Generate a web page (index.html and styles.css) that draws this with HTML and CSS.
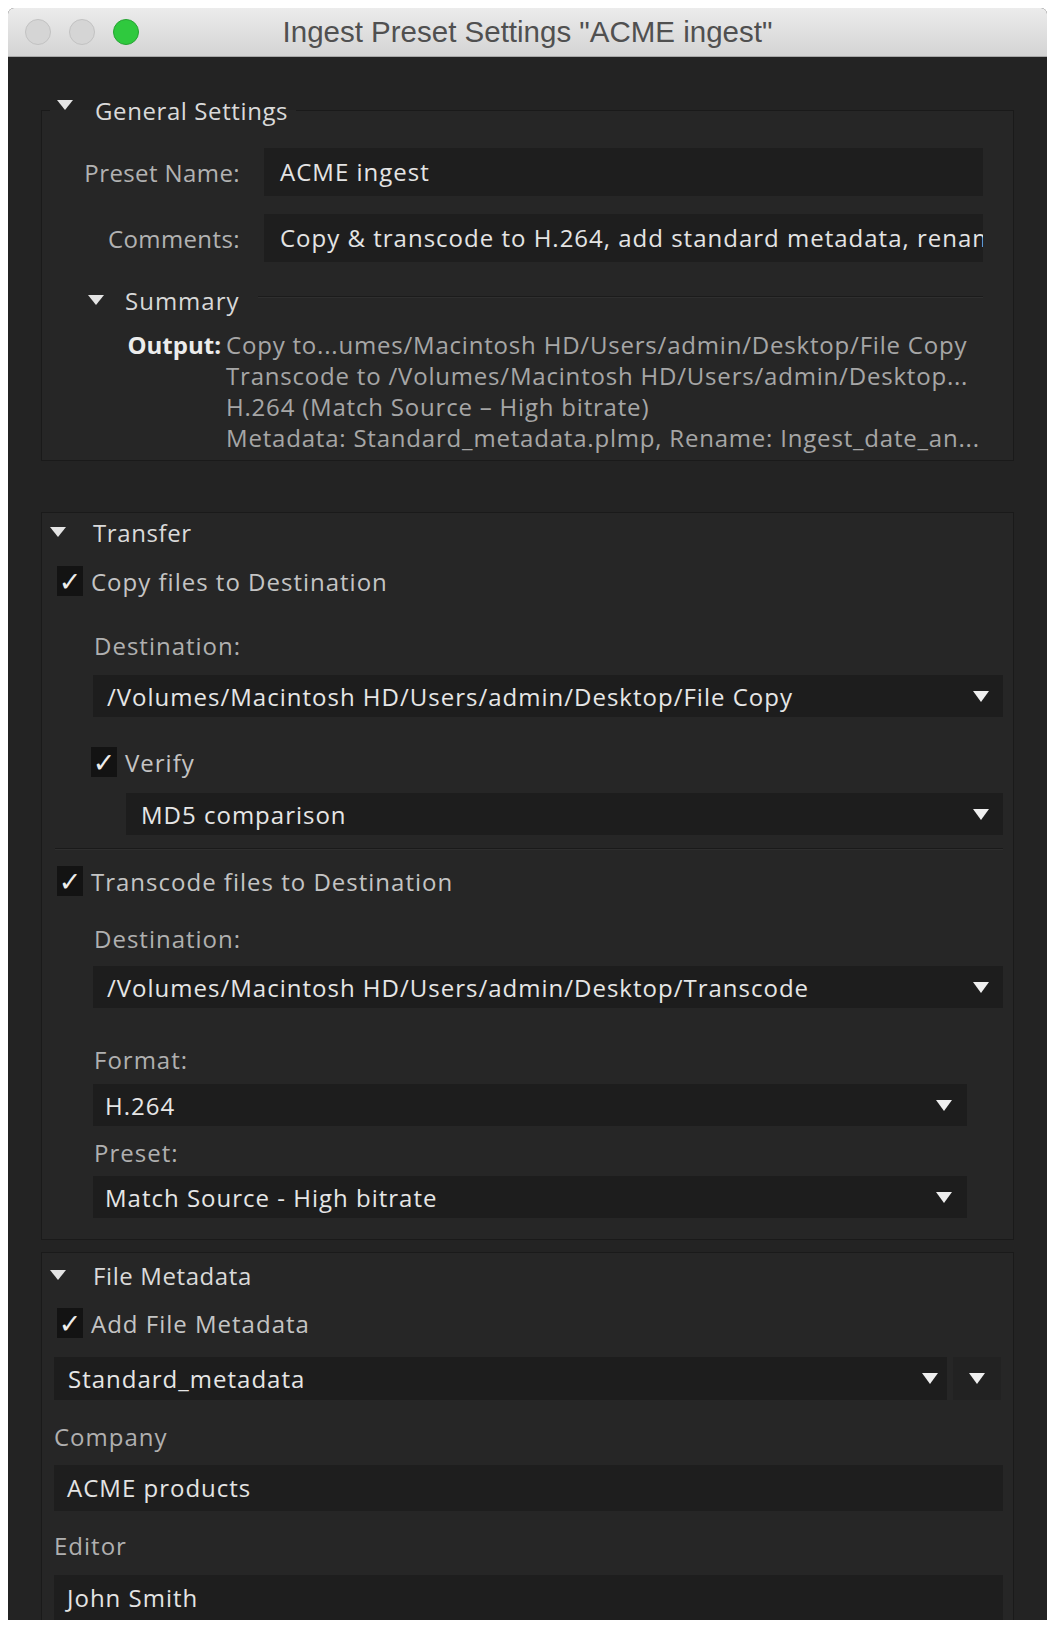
FILE: index.html
```html
<!DOCTYPE html>
<html lang="en">
<head>
    <meta charset="UTF-8">
    <meta name="viewport" content="width=device-width, initial-scale=1.0">
    <title>Ingest Preset Settings</title>
    <link rel="stylesheet" href="styles.css">
</head>
<body>

    <div class="window">
        <div class="titlebar">
            <div class="lights">
                <span class="light"></span>
                <span class="light"></span>
                <span class="light green"></span>
            </div>
            <div class="title">Ingest Preset Settings &quot;ACME ingest&quot;</div>
            <div></div>
        </div>

        <div class="content">
            <!-- General settings -->
            <fieldset class="group general">
                <legend><span class="legend-inner"><span class="tri tri-up"></span>General Settings</span></legend>
                <div class="field-grid">
                    <label class="field-label">Preset Name:</label>
                    <div class="input">ACME ingest</div>
                    <label class="field-label">Comments:</label>
                    <div class="input">Copy &amp; transcode to H.264, add standard metadata, rename</div>
                </div>
                <div class="summary-head">
                    <span class="tri"></span>
                    <span>Summary</span>
                    <span class="rule"></span>
                </div>
                <div class="output">
                    <span class="output-label">Output:</span>
                    <div class="output-lines">
                        <div>Copy to...umes/Macintosh HD/Users/admin/Desktop/File Copy</div>
                        <div>Transcode to /Volumes/Macintosh HD/Users/admin/Desktop...</div>
                        <div>H.264 (Match Source &ndash; High bitrate)</div>
                        <div>Metadata: Standard_metadata.plmp, Rename: Ingest_date_an...</div>
                    </div>
                </div>
            </fieldset>

            <!-- Transfer -->
            <section class="group transfer">
                <div class="group-head"><span class="tri"></span>Transfer</div>

                <div class="check copy-check"><span class="box">&#10003;</span>Copy files to Destination</div>
                <div class="label dest-label">Destination:</div>
                <div class="select dest-select"><span>/Volumes/Macintosh HD/Users/admin/Desktop/File Copy</span><span class="arrow"></span></div>
                <div class="check verify-check"><span class="box">&#10003;</span>Verify</div>
                <div class="select md5-select"><span>MD5 comparison</span><span class="arrow"></span></div>

                <div class="divider"></div>

                <div class="check transcode-check"><span class="box">&#10003;</span>Transcode files to Destination</div>
                <div class="label dest-label2">Destination:</div>
                <div class="select dest-select2"><span>/Volumes/Macintosh HD/Users/admin/Desktop/Transcode</span><span class="arrow"></span></div>
                <div class="label format-label">Format:</div>
                <div class="select short format-select"><span>H.264</span><span class="arrow"></span></div>
                <div class="label preset-label">Preset:</div>
                <div class="select short preset-select"><span>Match Source - High bitrate</span><span class="arrow"></span></div>
            </section>

            <!-- File metadata -->
            <section class="group metadata">
                <div class="group-head"><span class="tri"></span>File Metadata</div>
                <div class="check meta-check"><span class="box">&#10003;</span>Add File Metadata</div>
                <div class="meta-row">
                    <div class="select meta-select"><span>Standard_metadata</span><span class="arrow"></span></div>
                    <div class="menu-btn"><span class="arrow"></span></div>
                </div>
                <div class="label meta-label company-label">Company</div>
                <div class="input meta-input company-input">ACME products</div>
                <div class="label meta-label editor-label">Editor</div>
                <div class="input meta-input editor-input">John Smith</div>
            </section>
        </div>
    </div>

</body>
</html>
```

FILE: styles.css
```css
body {
    margin: 0;
    background: #fff;
    font-family: "Open Sans", "Liberation Sans", sans-serif;
}

.window {
    width: 1039px;
    height: 1612px;
    margin: 8px 4px 0 8px;
    overflow: hidden;
    border-radius: 6px 6px 0 0;
    background: #232323;
}

/* title bar */
.titlebar {
    display: grid;
    grid-template-columns: 1fr auto 1fr;
    align-items: center;
    height: 48px;
    border-bottom: 1px solid #a8a8a8;
    background: linear-gradient(#ececec, #d4d4d4);
}

.lights {
    display: flex;
    gap: 18px;
    padding-left: 17px;
}

.light {
    width: 26px;
    height: 26px;
    box-sizing: border-box;
    border-radius: 50%;
    background: #d5d5d5;
    border: 1px solid #c2c2c2;
}

.light.green {
    background: #2fc93e;
    border-color: #25a332;
}

.title {
    font-family: "Liberation Sans", Arial, sans-serif;
    font-size: 29.5px;
    color: #505050;
}

/* content */
.content {
    padding: 38px 33px 0;
    font-size: 24px;
    letter-spacing: 1px;
    color: #c6c6c6;
}

.group {
    margin: 0;
    border: 1px solid #1a1a1a;
    background: #262626;
    min-width: 0;
}

.tri {
    width: 0;
    height: 0;
    border-left: 8px solid transparent;
    border-right: 8px solid transparent;
    border-top: 10px solid #e4e4e4;
    flex: none;
}

.tri-up {
    align-self: flex-start;
    margin-top: 5px;
}

/* general settings */
.general {
    padding: 0 30px 7px 8px;
}

.general legend {
    padding: 0 8px 0 7px;
}

.legend-inner {
    display: flex;
    align-items: center;
    gap: 22px;
    height: 30px;
    color: #dadada;
    letter-spacing: 0.6px;
}

.field-grid {
    display: grid;
    grid-template-columns: 190px 1fr;
    column-gap: 24px;
    row-gap: 18px;
    align-items: center;
    margin-top: 23px;
}

.field-label {
    text-align: right;
    color: #b2b2b2;
    letter-spacing: 0.4px;
}

.input {
    height: 48px;
    line-height: 48px;
    padding: 0 16px;
    background: #1e1e1e;
    color: #e4e4e4;
    white-space: nowrap;
    overflow: hidden;
}

.summary-head {
    display: flex;
    align-items: center;
    height: 30px;
    margin-top: 23px;
    padding-left: 38px;
    color: #d8d8d8;
}

.summary-head .tri {
    margin-right: 21px;
}

.summary-head .rule {
    flex: 1;
    margin-left: 19px;
    margin-top: -6px;
    border-top: 1px solid #1b1b1b;
    border-bottom: 1px solid #2f2f2f;
}

.output {
    display: grid;
    grid-template-columns: 171px 1fr;
    column-gap: 5px;
    margin-top: 14px;
    line-height: 31px;
}

.output-label {
    text-align: right;
    font-weight: 700;
    color: #ececec;
    letter-spacing: 0;
}

.output-lines {
    color: #a6a6a6;
    white-space: nowrap;
    letter-spacing: 0.8px;
}

/* transfer + metadata */
.transfer {
    margin-top: 51px;
    padding: 4px 10px 21px 8px;
}

.metadata {
    margin-top: 12px;
    padding: 7px 10px 0 8px;
}

.group-head {
    display: flex;
    align-items: center;
    gap: 27px;
    height: 30px;
    color: #dadada;
    letter-spacing: 0.6px;
}

.check {
    display: flex;
    align-items: center;
    gap: 8px;
    height: 30px;
    color: #c4c4c4;
}

.box {
    width: 26px;
    height: 30px;
    display: flex;
    align-items: center;
    justify-content: center;
    background: #131313;
    color: #ededed;
    font-family: "DejaVu Sans", sans-serif;
    font-size: 27px;
    letter-spacing: 0;
}

.label {
    height: 30px;
    line-height: 30px;
    color: #b0b0b0;
}

.select {
    display: flex;
    align-items: center;
    justify-content: space-between;
    height: 42px;
    padding: 0 14px 0 14px;
    background: #1d1d1d;
    color: #e6e6e6;
    white-space: nowrap;
}

.arrow {
    width: 0;
    height: 0;
    border-left: 8px solid transparent;
    border-right: 8px solid transparent;
    border-top: 11px solid #efefef;
    flex: none;
}

.copy-check { margin: 19px 0 0 7px; }
.dest-label { margin: 35px 0 0 44px; }
.dest-select { margin: 14px 0 0 43px; }
.verify-check { margin: 30px 0 0 41px; }
.md5-select { margin: 16px 0 0 76px; padding-left: 15px; }

.divider {
    margin: 13px 0 0 5px;
    border-top: 1px solid #1a1a1a;
    border-bottom: 1px solid #2e2e2e;
}

.transcode-check { margin: 16px 0 0 7px; }
.dest-label2 { margin: 28px 0 0 44px; }
.dest-select2 { margin: 12px 0 0 43px; }
.format-label { margin: 37px 0 0 44px; }
.format-select { margin-top: 9px; }
.preset-label { margin: 12px 0 0 44px; }
.preset-select { margin-top: 8px; }

.select.short {
    margin-left: 43px;
    margin-right: 36px;
    padding-left: 12px;
    padding-right: 15px;
}

.meta-check { margin: 18px 0 0 7px; }

.meta-row {
    display: flex;
    gap: 6px;
    margin: 19px 2px 0 4px;
}

.meta-select {
    flex: 1;
    height: 43px;
    padding-right: 9px;
}

.menu-btn {
    width: 48px;
    height: 43px;
    display: flex;
    align-items: center;
    justify-content: center;
    background: #222;
}

.meta-label { margin-left: 4px; }
.company-label { margin-top: 22px; }
.editor-label { margin-top: 20px; }

.meta-input {
    height: 46px;
    line-height: 46px;
    margin-left: 4px;
    padding: 0 13px;
}

.company-input { margin-top: 13px; }
.editor-input { margin-top: 14px; }
```
